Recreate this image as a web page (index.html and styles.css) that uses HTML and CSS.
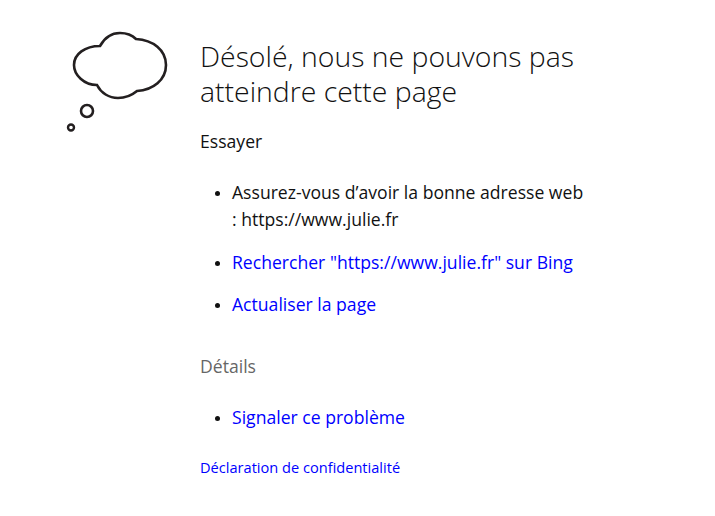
FILE: index.html
```html
<!DOCTYPE html>
<html lang="fr">
  <head>
    <meta charset="UTF-8" />
    <title>Désolé</title>
    <link rel="stylesheet" href="styles.css">
  </head>
  <body>
    <div class="page">
      <svg class="cloud" width="110" height="110" viewBox="0 0 110 110" fill="none" stroke="#231f20">
        <path stroke-width="2.6" d="M37 18C42 9 49 5 57 5C63 5 69 7 73 11C90 12 103 22 103 37C103 52 90 62 74 63C68 68 62 70 55 70C46 70 38 65 34 57C21 57 11 47 11 37C11 26 22 18 37 18Z"/>
        <circle stroke-width="2.6" cx="24" cy="83" r="6"/>
        <circle stroke-width="2.4" cx="8" cy="99.5" r="3"/>
      </svg>
      <div class="content">
        <h1>Désolé, nous ne pouvons pas atteindre cette page</h1>
        <p class="try">Essayer</p>
        <ul>
          <li>Assurez-vous d’avoir la bonne adresse web : https://www.julie.fr</li>
          <li><a href="#">Rechercher "https://www.julie.fr" sur Bing</a></li>
          <li><a href="#">Actualiser la page</a></li>
        </ul>
        <p class="details">Détails</p>
        <ul>
          <li><a href="#">Signaler ce problème</a></li>
        </ul>
        <a class="privacy" href="#">Déclaration de confidentialité</a>
      </div>
    </div>
  </body>
</html>
```

FILE: styles.css
```css
body {
  margin: 0;
  font-family: "Open Sans", "Noto Sans", sans-serif;
  color: #111;
  background: #fff;
}
a {
  color: #0000ff;
  text-decoration: none;
}
.page {
  display: flex;
  padding: 28px 0 0 63px;
}
.cloud {
  flex: none;
  width: 110px;
  height: 110px;
}
.content {
  width: 388px;
  margin-left: 27px;
  padding-top: 11px;
}
h1 {
  margin: 0;
  font-size: 28.4px;
  line-height: 35px;
  font-weight: 300;
}
.try {
  margin: 19px 0 0;
  font-size: 17.6px;
  line-height: 27px;
}
.details {
  margin: 35px 0 0;
  font-size: 17.6px;
  line-height: 27px;
  color: #666;
}
ul {
  margin: 24px 0 0;
  padding-left: 32px;
  font-size: 17.6px;
  line-height: 27px;
}
li {
  margin-bottom: 15.5px;
}
li::marker {
  font-size: 14px;
}
.privacy {
  display: block;
  margin-top: 26px;
  font-size: 14.6px;
  line-height: 20px;
}
```
